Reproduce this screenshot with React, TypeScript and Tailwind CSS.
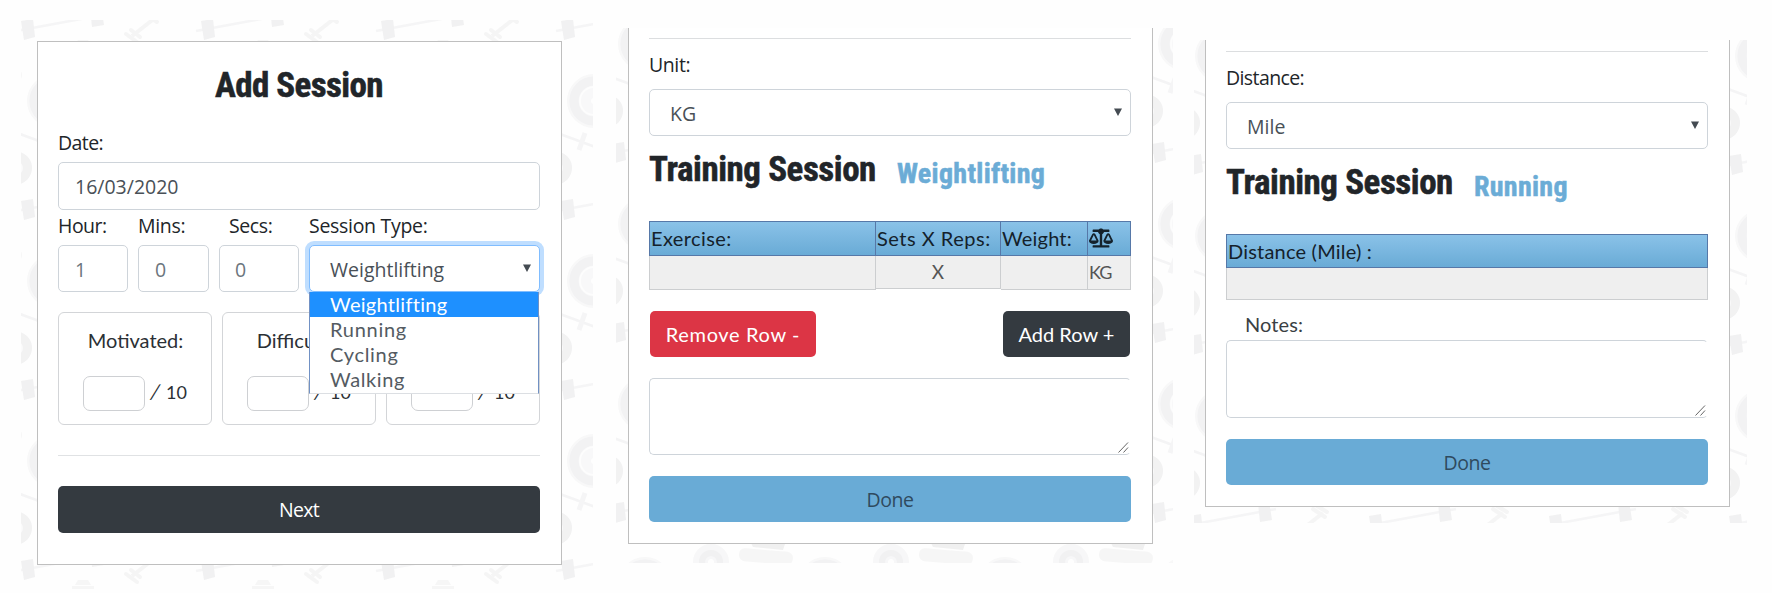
import type { ReactNode } from "react";
import { FaBalanceScale } from "react-icons/fa";

const TILE = 180;
const SHIFTS = [-TILE, 0, TILE];

function GymTile() {
  return (
    <g>
      {/* long barbell */}
      <path d="M16 31 L108 14" stroke="#f4f4f5" strokeWidth="2.5" />
      <path d="M21 21 L33 19 L35 37 L24 40 Z M90 8 L101 6 L104 25 L92 27 Z" fill="#efeff0" />
      {/* diagonal dumbbell */}
      <path d="M132 36 L155 18" stroke="#f4f4f4" strokeWidth="4" />
      <path d="M126 34 L137 42 M131 30 L140 37 M145 14 L157 22 M149 11 L159 17" stroke="#f4f4f4" strokeWidth="4" strokeLinecap="round" />
      {/* large plate */}
      <circle cx="54" cy="101" r="27" fill="#f7f7f8" />
      <circle cx="54" cy="101" r="20" fill="none" stroke="#f0f0f2" strokeWidth="9" />
      <circle cx="54" cy="101" r="14" fill="#f8f8f9" stroke="#fdfdfd" strokeWidth="2" />
      <circle cx="54" cy="101" r="3" fill="#fff" />
      {/* small plate */}
      <circle cx="15.5" cy="168" r="12" fill="#fbfbfb" stroke="#f0f0f1" strokeWidth="9" />
      {/* thin bar */}
      <path d="M20 134 L58 148" stroke="#f3f3f4" strokeWidth="2.5" />
      <path d="M45 133 L39 150" stroke="#f4f4f5" strokeWidth="5" />
      {/* bumper plate */}
      <circle cx="120" cy="79" r="18" fill="#f6f6f7" />
      <circle cx="120" cy="79" r="9" fill="none" stroke="#efeff1" strokeWidth="6" />
      <circle cx="120" cy="79" r="3" fill="#fff" />
      {/* stacked discs */}
      <path d="M159 58 L195 58 L192 67 L162 64 Z" fill="#eeeeee" />
      <rect x="148" y="67" width="54" height="13" rx="6" fill="#f5f5f5" transform="rotate(5 175 73)" />
      <path d="M78 40 h10 l3 5 h-16 z M72 46 h22 v4 h-22 z" fill="#f5f5f5" />
    </g>
  );
}

function Backdrop({ id, x, y }: { id: string; x: number; y: number }) {
  return (
    <svg className="absolute inset-0 h-full w-full opacity-85" aria-hidden="true">
      <defs>
        <pattern id={id} x={x} y={y} width={TILE} height={TILE} patternUnits="userSpaceOnUse">
          {SHIFTS.map((dx) =>
            SHIFTS.map((dy) => (
              <g key={`${dx},${dy}`} transform={`translate(${dx} ${dy})`}>
                <GymTile />
              </g>
            )),
          )}
        </pattern>
      </defs>
      <rect width="100%" height="100%" fill={`url(#${id})`} />
    </svg>
  );
}

const label = "block h-[30px] font-['Open_Sans','Noto_Sans',sans-serif] text-[19.5px] leading-[32px] text-[#212529]";
const control = "flex items-center rounded-[5px] border bg-white pt-[2px] font-['Open_Sans','Noto_Sans',sans-serif] text-[19.5px]";

function Select({ value, className = "border-[#ced4da]" }: { value: string; className?: string }) {
  return (
    <div className={`${control} h-[47px] justify-between pr-[8px] pl-5 text-[#495057] ${className}`}>
      <span>{value}</span>
      <svg className="mb-[3px] h-[8px] w-[8px]" viewBox="0 0 8 8">
        <path d="M0 0.5 H8 L4 8 Z" fill="#444b52" />
      </svg>
    </div>
  );
}

function NotesArea({ className = "" }: { className?: string }) {
  return (
    <div className={`flex items-end justify-end rounded-[5px] border border-[#ced4da] border-r-white bg-white ${className}`}>
      <svg className="h-[12px] w-[12px]" viewBox="0 0 12 12">
        <path d="M0.5 10.5 L10 0.5 M5.5 10.5 L10 5.5" stroke="#666" strokeWidth="1" fill="none" />
      </svg>
    </div>
  );
}

function SessionHeading({ kind }: { kind: string }) {
  return (
    <div className="mt-[13px] flex h-[41px] items-start font-['Roboto',sans-serif] font-bold [font-stretch:75%] [-webkit-text-stroke:0.5px_currentColor]">
      <h2 className="w-[248px] text-[35px] leading-[42px] tracking-[-0.45px] whitespace-nowrap text-[#212529]">Training Session</h2>
      <h3 className="mt-1 text-[28px] leading-[42px] tracking-[0.3px] whitespace-nowrap text-[#6bacd6]">{kind}</h3>
    </div>
  );
}

function Rating({ name }: { name: string }) {
  return (
    <div className="h-[113px] rounded-[6px] border border-[#d3d5d8] pt-3 text-[20px] leading-[30px] text-[#2b3035]">
      <div className="h-[30px] pl-px text-center">{name}</div>
      <div className="mt-[21px] flex items-start pl-6">
        <div className="h-[35px] w-[62px] rounded-[7px] border border-[#ced0d3] bg-white" />
        <div className="flex items-baseline gap-[6px] pl-[6px]">
          <span className="inline-block -skew-x-12">/</span>
          <span className="text-[18px]">10</span>
        </div>
      </div>
    </div>
  );
}

function Done({ className = "" }: { className?: string }) {
  return (
    <button className={`flex w-full items-center justify-center rounded-[5px] bg-[#69abd6] pt-[2px] font-['Open_Sans','Noto_Sans',sans-serif] text-[19.5px] tracking-[-0.5px] text-[#2f4a5e] ${className}`}>
      Done
    </button>
  );
}

function Panel({ className, children }: { className: string; children: ReactNode }) {
  return <section className={`relative shrink-0 overflow-hidden ${className}`}>{children}</section>;
}

const headRow = "border-[#5678a8] bg-linear-to-b from-[#8ac2e8] to-[#69abd6] pb-px text-[20px] text-[#14212b]";

export default function App() {
  return (
    <main className="flex h-[593px] w-[1772px] items-start overflow-hidden bg-[#fefefe] font-['Lato',sans-serif]">
      <Panel className="mt-5 ml-[21px] h-[569px] w-[572px]">
        <Backdrop id="gym-a" x={-21} y={-20} />
        <div className="relative mt-[21px] ml-4 h-[524px] w-[525px] border border-[#bfbfbf] bg-white pt-[23px] pr-[21px] pl-5">
          <h2 className="text-center font-['Roboto',sans-serif] text-[35px] leading-[42px] font-bold tracking-[-0.6px] text-[#212529] [font-stretch:75%] [-webkit-text-stroke:0.5px_currentColor]">
            Add Session
          </h2>
          <span className={`${label} mt-5 tracking-[-0.6px]`}>Date:</span>
          <div className={`${control} mt-[5px] h-12 border-[#ced4da] pl-4 text-[#495057]`}>16/03/2020</div>
          <div className="grid grid-cols-[70px_71px_80px_231px] gap-x-[10px] gap-y-[5px]">
            <span className={`${label} tracking-[-0.5px]`}>Hour:</span>
            <span className={`${label} tracking-[-0.3px]`}>Mins:</span>
            <span className={`${label} pl-[10px] tracking-[-0.4px]`}>Secs:</span>
            <span className={`${label} tracking-[-0.3px]`}>Session Type:</span>
            <div className={`${control} h-[47px] border-[#ced4da] pl-4 text-[#6c757d]`}>1</div>
            <div className={`${control} h-[47px] border-[#ced4da] pl-4 text-[#6c757d]`}>0</div>
            <div className={`${control} h-[47px] border-[#ced4da] pl-[15px] text-[#6c757d]`}>0</div>
            <div className="relative">
              <Select value="Weightlifting" className="border-[#80bdff] shadow-[0_0_0_4px_#bfdeff]" />
              <ul className="absolute top-[47px] left-0 z-10 h-[102px] w-[230px] border-x border-b border-x-[#7191c4] border-b-[#dcdfe3] bg-white text-[20px] leading-[25px] text-[#545b62]">
                <li className="bg-[#1e90ff] pl-5 tracking-[0.3px] text-white">Weightlifting</li>
                <li className="pl-5 tracking-[0.7px]">Running</li>
                <li className="pl-5 tracking-[0.7px]">Cycling</li>
                <li className="pl-5 tracking-[0.6px]">Walking</li>
              </ul>
            </div>
          </div>
          <div className="mt-5 grid grid-cols-3 gap-[10px]">
            <Rating name="Motivated:" />
            <Rating name="Difficulty:" />
            <Rating name="" />
          </div>
          <hr className="mt-[30px] border-[#e0e2e4]" />
          <button className="mt-[30px] flex h-[47px] w-full items-center justify-center rounded-[5px] bg-[#343a40] pt-px font-['Open_Sans','Noto_Sans',sans-serif] text-[19.5px] font-medium tracking-[-0.7px] text-white">
            Next
          </button>
        </div>
      </Panel>

      <Panel className="mt-7 ml-[23px] h-[535px] w-[557px]">
        <Backdrop id="gym-b" x={-25} y={-85} />
        <div className="relative ml-3 h-[516px] w-[525px] border border-t-0 border-[#bfbfbf] bg-white pt-[10px] pr-[21px] pl-5">
          <hr className="border-[#dcdee0]" />
          <span className={`${label} mt-[10px] tracking-[-0.4px]`}>Unit:</span>
          <Select value="KG" className="mt-[10px] border-[#ced4da]" />
          <SessionHeading kind="Weightlifting" />
          <div className="mt-[31px] grid grid-cols-[227px_125px_87px_43px]">
            <div className={`${headRow} flex h-[35px] items-center border pl-px tracking-[0.4px]`}>Exercise:</div>
            <div className={`${headRow} flex h-[35px] items-center border-y border-r pl-px tracking-[0.5px]`}>Sets X Reps:</div>
            <div className={`${headRow} flex h-[35px] items-center border-y border-r pl-px tracking-[0.2px]`}>Weight:</div>
            <div className={`${headRow} flex h-[35px] items-center border-y border-r pl-px`}>
              <FaBalanceScale className="h-6 w-6" />
            </div>
            <div className="h-[34px] border-x border-b border-[#ccced0] bg-[#efefef]" />
            <div className="flex h-[33px] items-center justify-center border-r border-b border-[#ccced0] bg-[#efefef] text-[19px] text-[#555]">X</div>
            <div className="h-[34px] border-r border-b border-[#ccced0] bg-[#efefef]" />
            <div className="flex h-[34px] items-center border-r border-b border-[#ccced0] bg-[#efefef] pl-px text-[18px] tracking-[-1px] text-[#555]">KG</div>
          </div>
          <div className="mt-[21px] flex justify-between px-px text-[20px] text-white">
            <button className="h-[46px] w-[166px] rounded-[5px] bg-[#dc3545] tracking-[0.65px]">Remove Row -</button>
            <button className="h-[46px] w-[127px] rounded-[5px] bg-[#343a40]">Add Row +</button>
          </div>
          <NotesArea className="mt-[21px] h-[77px]" />
          <Done className="mt-[21px] h-[46px]" />
        </div>
      </Panel>

      <Panel className="mt-10 ml-[21px] h-[483px] w-[553px]">
        <Backdrop id="gym-c" x={-26} y={-85} />
        <div className="relative ml-[11px] h-[467px] w-[525px] border border-t-0 border-[#bfbfbf] bg-white pt-[11px] pr-[21px] pl-5">
          <hr className="border-[#dcdee0]" />
          <span className={`${label} mt-[10px] tracking-[-0.6px]`}>Distance:</span>
          <Select value="Mile" className="mt-[10px] border-[#ced4da]" />
          <SessionHeading kind="Running" />
          <div className="mt-[31px]">
            <div className={`${headRow} flex h-[34px] items-center border pl-px tracking-[0.2px]`}>Distance (Mile) :</div>
            <div className="h-8 border-x border-b border-[#ccced0] bg-[#efefef]" />
          </div>
          <span className="mt-[9px] block pl-[19px] text-[20px] leading-[30px] tracking-[0.1px] text-[#3a3f44]">Notes:</span>
          <NotesArea className="mt-px h-[78px]" />
          <Done className="mt-[21px] h-[46px]" />
        </div>
      </Panel>
    </main>
  );
}
